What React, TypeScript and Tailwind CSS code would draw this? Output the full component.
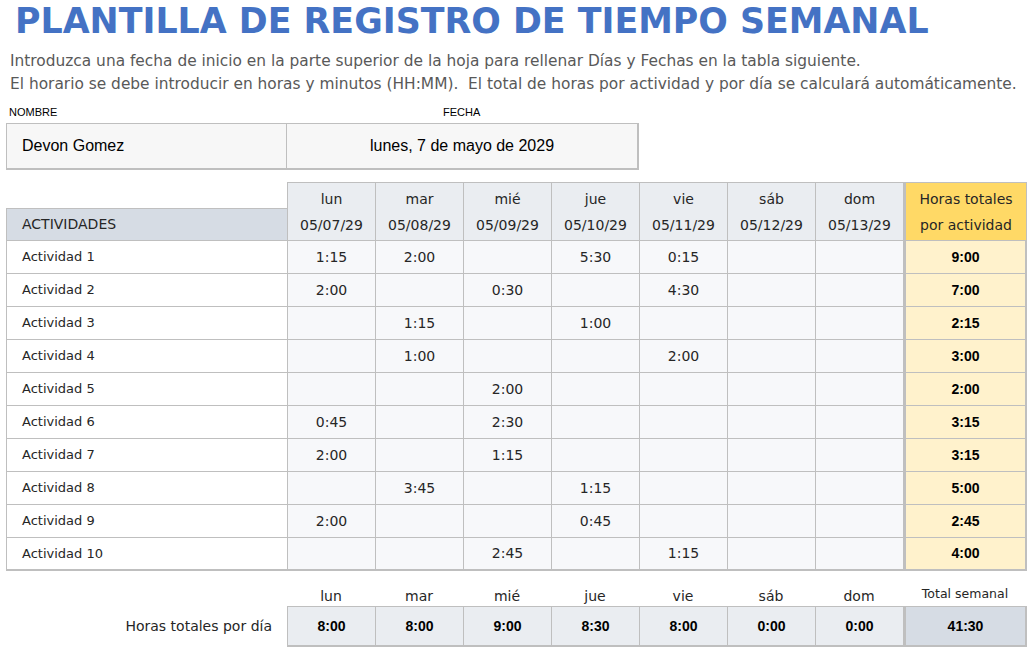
import React from "react";

const days = [
  { d: "lun", date: "05/07/29" },
  { d: "mar", date: "05/08/29" },
  { d: "mié", date: "05/09/29" },
  { d: "jue", date: "05/10/29" },
  { d: "vie", date: "05/11/29" },
  { d: "sáb", date: "05/12/29" },
  { d: "dom", date: "05/13/29" },
];

const rows: { name: string; hours: string[]; total: string }[] = [
  { name: "Actividad 1", hours: ["1:15", "2:00", "", "5:30", "0:15", "", ""], total: "9:00" },
  { name: "Actividad 2", hours: ["2:00", "", "0:30", "", "4:30", "", ""], total: "7:00" },
  { name: "Actividad 3", hours: ["", "1:15", "", "1:00", "", "", ""], total: "2:15" },
  { name: "Actividad 4", hours: ["", "1:00", "", "", "2:00", "", ""], total: "3:00" },
  { name: "Actividad 5", hours: ["", "", "2:00", "", "", "", ""], total: "2:00" },
  { name: "Actividad 6", hours: ["0:45", "", "2:30", "", "", "", ""], total: "3:15" },
  { name: "Actividad 7", hours: ["2:00", "", "1:15", "", "", "", ""], total: "3:15" },
  { name: "Actividad 8", hours: ["", "3:45", "", "1:15", "", "", ""], total: "5:00" },
  { name: "Actividad 9", hours: ["2:00", "", "", "0:45", "", "", ""], total: "2:45" },
  { name: "Actividad 10", hours: ["", "", "2:45", "", "1:15", "", ""], total: "4:00" },
];

const dayTotals = ["8:00", "8:00", "9:00", "8:30", "8:00", "0:00", "0:00"];

const gothic = "font-['Century_Gothic','DejaVu_Sans',sans-serif]";
const arial = "font-['Liberation_Sans',Arial,sans-serif]";
const cols = "grid grid-cols-[281px_repeat(7,88px)_124px]";

export default function App() {
  return (
    <div className={`w-[1034px] h-[652px] bg-white overflow-hidden ${gothic}`}>
      {/* Title */}
      <h1 className="pl-[15px] h-[50px] whitespace-nowrap text-[34.8px] leading-[43px] font-bold text-[#4472c4]">
        PLANTILLA DE REGISTRO DE TIEMPO SEMANAL
      </h1>
      <div className="pl-[10px] text-[15.4px] leading-[23px] text-[#595959] whitespace-nowrap">
        <p>Introduzca una fecha de inicio en la parte superior de la hoja para rellenar Días y Fechas en la tabla siguiente.</p>
        <p>El horario se debe introducir en horas y minutos (HH:MM).&nbsp; El total de horas por actividad y por día se calculará automáticamente.</p>
      </div>

      {/* Name / date */}
      <div className={`pl-[6px] mt-[5px] ${arial}`}>
        <div className="flex h-[22px] items-center text-[11px] text-black">
          <span className="w-[281px] pl-[3px]">NOMBRE</span>
          <span className="pl-[156px]">FECHA</span>
        </div>
        <div className="flex w-[633px] h-[47px] bg-[#f7f7f7] border border-[#bfbfbf] border-r-2 border-b-2">
          <div className="w-[280px] border-r border-[#bfbfbf] flex items-center pl-[15px] text-[16px] text-black">Devon Gomez</div>
          <div className="flex-1 flex items-center justify-center text-[16px] text-black">lunes, 7 de mayo de 2029</div>
        </div>
      </div>

      {/* Main table */}
      <div className={`pl-[6px] mt-[12px] ${cols}`}>
        <div className="flex flex-col justify-end">
          <div className="h-[33px] bg-[#d6dce4] border-t border-l border-b border-[#bfbfbf] flex items-center pl-[15px] text-[14px] text-[#262626]">
            ACTIVIDADES
          </div>
        </div>
        {days.map((x) => (
          <div
            key={x.d}
            className="h-[59px] bg-[#eaedf1] border-t border-l border-b border-[#bfbfbf] flex flex-col items-center justify-center gap-[8px] text-[14px] text-[#262626] leading-[18px]"
          >
            <span>{x.d}</span>
            <span>{x.date}</span>
          </div>
        ))}
        <div className="h-[59px] bg-[#ffd966] border-[#bfbfbf] border-t border-l-[3px] border-l-double border-r border-b flex flex-col items-center justify-center text-[14px] text-[#262626] leading-[26px]">
          <span>Horas totales</span>
          <span>por actividad</span>
        </div>

        {rows.map((r, i) => {
          const last = i === rows.length - 1;
          const bb = last ? "border-b-2" : "border-b";
          return (
            <React.Fragment key={r.name}>
              <div className={`h-[33px] bg-white border-l ${bb} border-[#bfbfbf] flex items-center pl-[15px] text-[13px] text-[#262626]`}>
                {r.name}
              </div>
              {r.hours.map((h, j) => (
                <div
                  key={j}
                  className={`h-[33px] bg-[#f7f8fa] border-l ${bb} border-[#bfbfbf] flex items-center justify-center text-[14px] text-[#262626]`}
                >
                  {h}
                </div>
              ))}
              <div className={`h-[33px] bg-[#fff2cc] border-l-[3px] border-l-double border-r-2 ${bb} border-[#bfbfbf] flex items-center justify-center text-[14px] font-bold text-black ${arial}`}>
                {r.total}
              </div>
            </React.Fragment>
          );
        })}
      </div>

      {/* Daily totals */}
      <div className={`pl-[6px] mt-[11px] ${cols}`}>
        <div />
        {days.map((x) => (
          <div key={x.d} className="h-[24px] flex items-center justify-center pt-[4px] text-[14px] text-[#262626]">
            {x.d}
          </div>
        ))}
        <div className="h-[24px] flex items-center justify-center text-[12.5px] text-[#262626]">Total semanal</div>

        <div className="h-[41px] flex items-center justify-end pr-[15px] text-[14px] text-[#262626]">Horas totales por día</div>
        {dayTotals.map((t, j) => (
          <div
            key={j}
            className={`h-[41px] bg-[#eaedf1] border-t border-l border-b-2 border-[#bfbfbf] flex items-center justify-center text-[14px] font-bold text-black ${arial}`}
          >
            {t}
          </div>
        ))}
        <div className={`h-[41px] bg-[#d6dce4] border-t border-l-[3px] border-l-double border-r-2 border-b-2 border-[#bfbfbf] flex items-center justify-center text-[14px] font-bold text-black ${arial}`}>
          41:30
        </div>
      </div>
    </div>
  );
}
